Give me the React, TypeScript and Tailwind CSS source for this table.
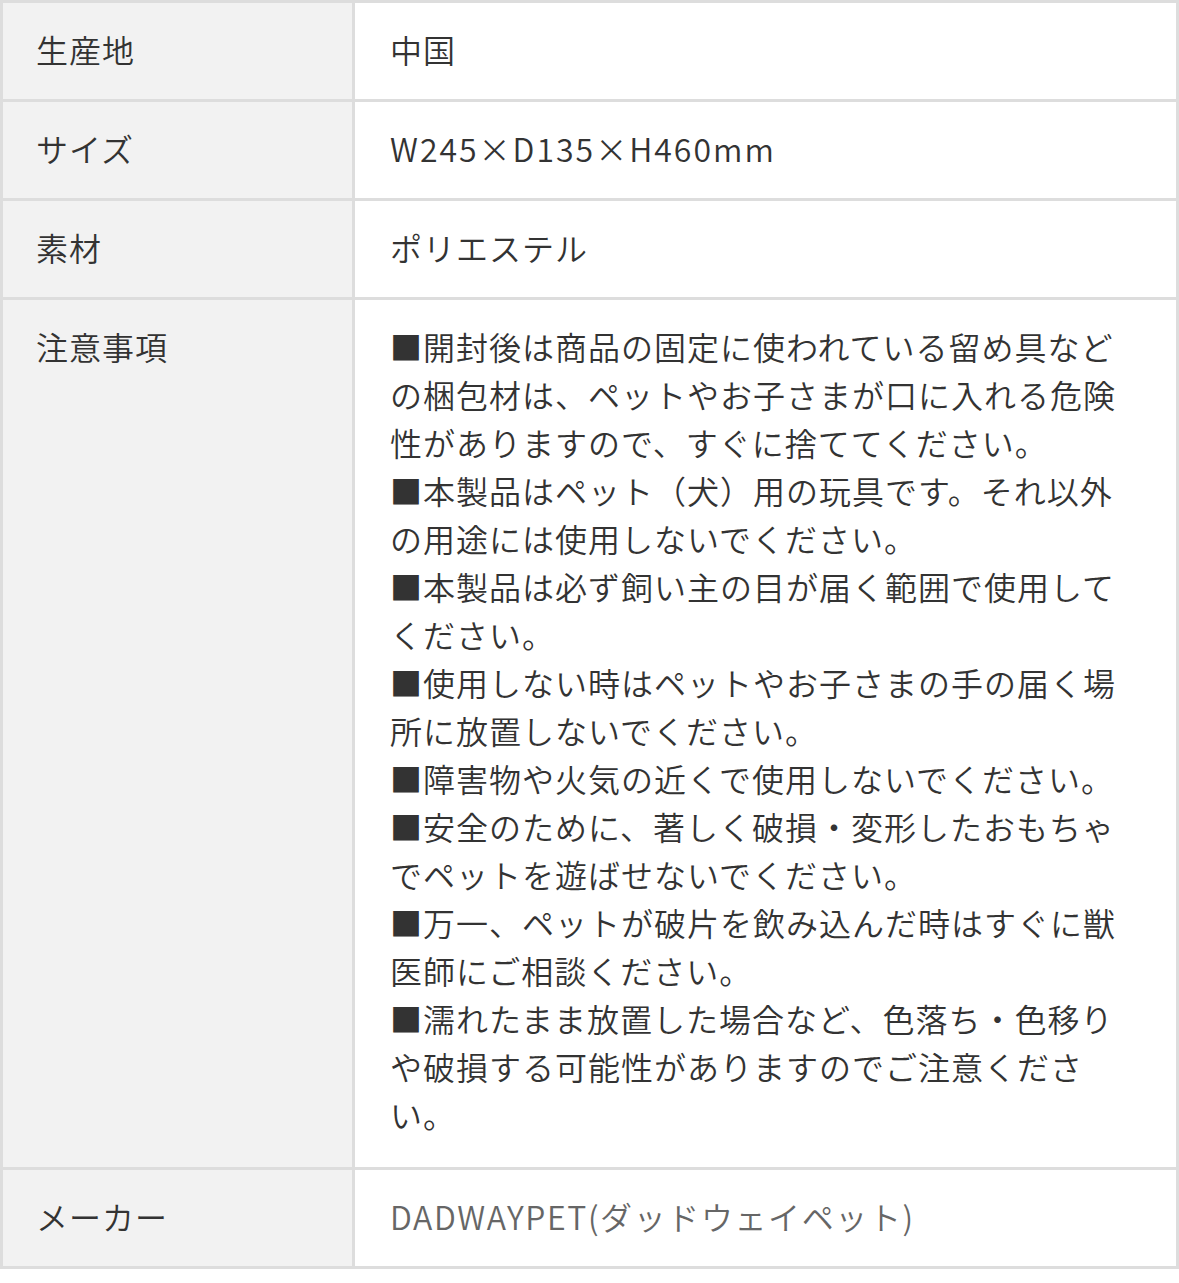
const notes = [
  '■開封後は商品の固定に使われている留め具など',
  'の梱包材は、ペットやお子さまが口に入れる危険',
  '性がありますので、すぐに捨ててください。',
  '■本製品はペット（犬）用の玩具です。それ以外',
  'の用途には使用しないでください。',
  '■本製品は必ず飼い主の目が届く範囲で使用して',
  'ください。',
  '■使用しない時はペットやお子さまの手の届く場',
  '所に放置しないでください。',
  '■障害物や火気の近くで使用しないでください。',
  '■安全のために、著しく破損・変形したおもちゃ',
  'でペットを遊ばせないでください。',
  '■万一、ペットが破片を飲み込んだ時はすぐに獣',
  '医師にご相談ください。',
  '■濡れたまま放置した場合など、色落ち・色移り',
  'や破損する可能性がありますのでご注意くださ',
  'い。',
]

function Row({ label, children, last }: { label: string; children: React.ReactNode; last?: boolean }) {
  return (
    <div className={`flex ${last ? '' : 'border-b-[3px] border-[#dddddd]'}`}>
      <div className="w-[352px] shrink-0 border-r-[3px] border-[#dddddd] bg-[#f2f2f2] px-[33px] pt-[22px] pb-[26px]">{label}</div>
      <div className="flex-1 bg-white px-[35px] pt-[22px] pb-[26px]">{children}</div>
    </div>
  )
}

export default function App() {
  return (
    <div
      className="min-h-[1283px] bg-white text-[32px] font-[350] leading-[48px] tracking-[1px] text-[#333333]"
      style={{ fontFamily: '"Noto Sans CJK JP", "Noto Sans", sans-serif' }}
    >
      <div className="w-[1179px] border-[3px] border-[#dddddd]">
        <Row label="生産地">中国</Row>
        <Row label="サイズ">
          <span className="tracking-[2px]">W245×D135×H460mm</span>
        </Row>
        <Row label="素材">ポリエステル</Row>
        <Row label="注意事項">
          <div className="pb-[3px]">
            {notes.map((line, i) => (
              <div key={i} className="whitespace-nowrap">{line}</div>
            ))}
          </div>
        </Row>
        <Row label="メーカー" last>
          <span className="tracking-[1.6px] text-[#666666]">DADWAYPET(ダッドウェイペット)</span>
        </Row>
      </div>
    </div>
  )
}
